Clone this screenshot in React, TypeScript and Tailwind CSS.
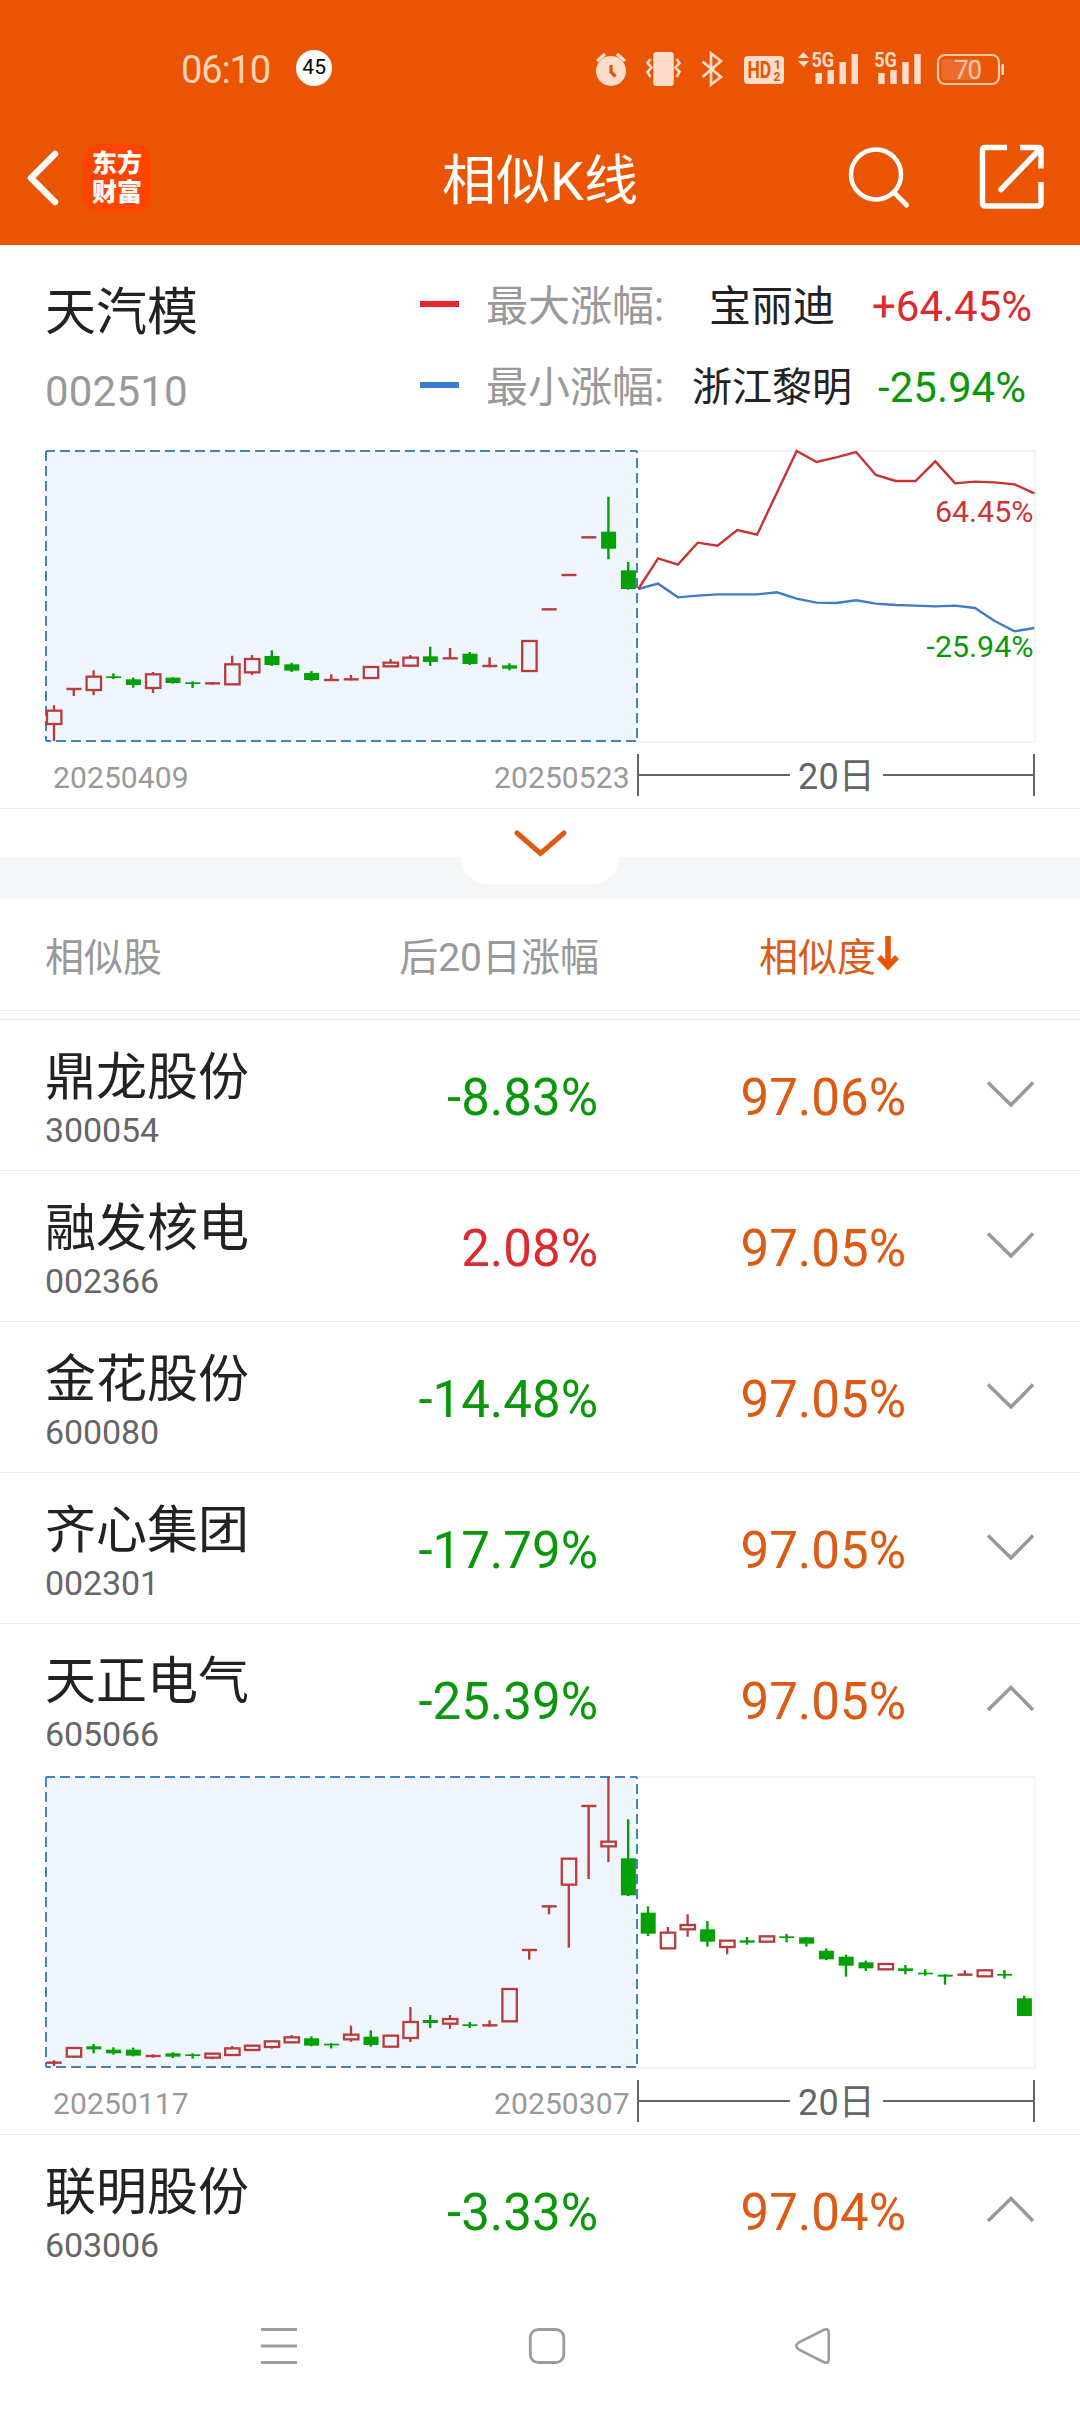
import type { ReactNode } from 'react';

type Candle = [kind: 'r' | 'g', high: number, top: number, bottom: number, low: number];

const STEP = 19.8;
const FIRST_X = 54;
const RED = '#b93b3b';
const GREEN = '#05a005';
const y = (v: number) => 2 + v / 3;

const mainCandles: Candle[] = [
  ['r', 763, 779, 819, 870], ['r', 714, 714, 714, 735], ['r', 658, 677, 717, 733], ['g', 667, 676, 681, 684],
  ['g', 680, 685, 702, 710], ['r', 663, 670, 711, 726], ['g', 679, 680, 696, 698], ['g', 691, 694, 699, 711],
  ['r', 693, 697, 697, 701], ['r', 614, 640, 700, 702], ['r', 612, 624, 664, 672], ['g', 598, 615, 642, 645],
  ['g', 635, 640, 659, 663], ['g', 660, 666, 687, 690], ['r', 670, 687, 687, 690], ['r', 672, 685, 685, 688],
  ['r', 648, 648, 681, 682], ['r', 624, 635, 646, 648], ['r', 612, 620, 644, 648], ['g', 587, 616, 633, 645],
  ['r', 591, 622, 622, 623], ['g', 603, 608, 639, 642], ['r', 619, 645, 645, 649], ['g', 637, 643, 653, 658],
  ['r', 570, 570, 660, 660], ['r', 475, 475, 475, 475], ['r', 372, 372, 372, 372], ['r', 259, 259, 259, 259],
  ['g', 137, 242, 293, 325], ['g', 333, 358, 414, 416],
];

const similarCandles: Candle[] = [
  ['r', 850, 857, 857, 867], ['r', 810, 813, 839, 843], ['g', 801, 808, 817, 829], ['g', 811, 818, 829, 833],
  ['g', 812, 818, 836, 838], ['r', 832, 837, 837, 842], ['g', 826, 829, 839, 843], ['g', 829, 832, 837, 845],
  ['r', 829, 830, 842, 847], ['r', 807, 814, 834, 836], ['r', 806, 806, 819, 819], ['r', 793, 793, 810, 815],
  ['r', 774, 781, 796, 796], ['g', 778, 784, 806, 808], ['g', 799, 800, 805, 814], ['r', 746, 773, 787, 794],
  ['g', 760, 779, 804, 809], ['r', 776, 776, 809, 811], ['r', 690, 735, 783, 795], ['g', 714, 729, 738, 753],
  ['r', 714, 726, 740, 755], ['g', 735, 742, 747, 753], ['r', 730, 745, 745, 749], ['r', 636, 636, 733, 735],
  ['r', 519, 519, 519, 548], ['r', 388, 388, 388, 412], ['r', 245, 245, 323, 512], ['r', 87, 87, 87, 306],
  ['r', 0, 194, 208, 255], ['g', 127, 244, 355, 357], ['g', 388, 407, 470, 477], ['r', 450, 467, 514, 516],
  ['r', 412, 444, 457, 479], ['g', 432, 457, 494, 509], ['r', 489, 491, 510, 532], ['g', 480, 490, 497, 503],
  ['r', 478, 478, 494, 496], ['g', 471, 478, 483, 496], ['g', 480, 481, 500, 509], ['g', 514, 521, 547, 549],
  ['g', 533, 539, 566, 599], ['g', 551, 556, 574, 582], ['r', 561, 561, 577, 579], ['g', 564, 574, 582, 592],
  ['g', 577, 587, 592, 596], ['g', 592, 593, 599, 623], ['r', 580, 593, 593, 594], ['r', 577, 580, 598, 600],
  ['g', 579, 591, 596, 605], ['g', 656, 664, 717, 717],
];

const maxLine = [414, 322, 341, 275, 284, 237, 251, 125, 0, 33, 19, 3, 72, 90, 90, 31, 97, 92, 94, 100, 127];
const minLine = [414, 398, 439, 434, 430, 430, 430, 424, 443, 455, 456, 448, 458, 462, 464, 466, 464, 471, 510, 541, 531];

const linePoints = (values: number[]) => values.map((v, i) => `${638.3 + i * STEP},${y(v)}`).join(' ');

function CandleMark({ candle: [kind, high, top, bottom, low], x }: { candle: Candle; x: number }) {
  const color = kind === 'r' ? RED : GREEN;
  if (kind === 'g') {
    return (
      <g fill={color}>
        <rect x={x - 1.2} y={y(high)} width={2.4} height={(low - high) / 3} />
        <rect x={x - 7.3} y={y(top)} width={15} height={(bottom - top) / 3} />
      </g>
    );
  }
  if (top === bottom) {
    return (
      <g fill={color}>
        <rect x={x - 1.2} y={y(high)} width={2.4} height={(low - high) / 3} />
        <rect x={x - 7.3} y={y(top) - 1.2} width={15} height={2.4} />
      </g>
    );
  }
  return (
    <g stroke={color} strokeWidth={2.3} fill="none">
      <path d={`M${x} ${y(high)}V${y(top)}M${x} ${y(bottom)}V${y(low)}`} />
      <rect x={x - 7} y={y(top)} width={14.4} height={(bottom - top) / 3} />
    </g>
  );
}

function KlineChart({ candles, from, to, children }: { candles: Candle[]; from: string; to: string; children?: ReactNode }) {
  return (
    <div>
      <svg className="block h-[296px] w-[1080px]" viewBox="0 0 1080 296" fontFamily='Roboto, "Noto Sans CJK SC", sans-serif'>
        <path d="M638 2H1035V293H638" fill="none" stroke="#f4f4f4" strokeWidth={2} />
        <rect x={46} y={2} width={591} height={290} fill="#eef5fd" />
        <path d="M46 2H637" stroke="#4583c0" strokeWidth={2} strokeDasharray="10 5" strokeDashoffset={1} />
        <path d="M46 2V292" stroke="#4583c0" strokeWidth={2} strokeDasharray="10 5" />
        <path d="M46 292H637" stroke="#4583c0" strokeWidth={2} strokeDasharray="10 5" strokeDashoffset={5} />
        {candles.map((c, i) => (
          <CandleMark key={i} candle={c} x={FIRST_X + i * STEP} />
        ))}
        <path d="M637 2V292" stroke="#4583c0" strokeWidth={2} strokeDasharray="10 5" strokeDashoffset={8} />
        {children}
      </svg>
      <div className="flex h-[63px] pl-[53px] text-[30px] leading-[35px] tracking-[0.100px] text-[#999]">
        <span className="mt-[15px] w-[136px]">{from}</span>
        <span className="mt-[15px] ml-[305px] w-[136px]">{to}</span>
        <div className="mt-[9px] ml-[7px] flex h-[42px] w-[398px] items-center border-x-2 border-[#666] text-[36px] text-[#666]">
          <span className="h-[2px] w-[151px] bg-[#666]" />
          <span className="flex-1 pt-[4px] text-center">20日</span>
          <span className="h-[2px] w-[150px] bg-[#666]" />
        </div>
      </div>
    </div>
  );
}

function Signal() {
  return (
    <g>
      <text transform="translate(-4 67) scale(0.86 1)" fontSize={21} fontWeight={700}>5G</text>
      <path d="M0 73h6.500v11H0zM12 70h6.500v14H12zM24 62h6.500v22H24zM36 54h6.500v30H36z" />
    </g>
  );
}

function StatusIcons() {
  return (
    <svg className="ml-auto block h-[50px] w-[500px]" viewBox="580 45 500 50" fill="#fcdccb" fontFamily="Roboto, sans-serif">
      <circle cx={611} cy={71} r={15} />
      <path d="M597 61l8-7M625 61l-8-7" stroke="#fcdccb" strokeWidth={3.2} />
      <path d="M611 65v7l4.500 4.500" stroke="#ea5504" strokeWidth={3.2} fill="none" />
      <rect x={653.3} y={52} width={20.4} height={34} rx={3} />
      <path d="M650.500 59l-3 4 4 4.500-4 4.500 3 5M676.500 59l3 4-4 4.500 4 4.500-3 5" stroke="#fcdccb" strokeWidth={2.6} fill="none" />
      <path d="M702.500 61.500L721 77l-10 7.500v-31L721 61 702.500 77" stroke="#fcdccb" strokeWidth={2.7} fill="none" />
      <rect x={744} y={56} width={40} height={28} rx={4} />
      <g fill="#ea5504" fontWeight={700}>
        <text transform="translate(747.5 78.300) scale(0.76 1)" fontSize={23}>HD</text>
        <text x={774} y={69} fontSize={12}>1</text>
        <text x={773.5} y={81} fontSize={12}>2</text>
      </g>
      <path d="M803.500 52l5.500 6h-11zM803.500 67l5.500-6h-11z" />
      <g transform="translate(815.5 0)"><Signal /></g>
      <g transform="translate(878.2 0)"><Signal /></g>
      <rect x={938} y={55} width={61} height={29} rx={7} fill="none" stroke="#fbc9a8" strokeWidth={2.2} />
      <rect x={941.5} y={59} width={38.5} height={21} rx={3} fill="#ee6c2b" />
      <rect x={1001.5} y={64} width={2.5} height={11} rx={1} />
      <text x={954} y={79} fontSize={26} fill="#fbc9a8" textLength={28}>70</text>
    </svg>
  );
}

function Header() {
  return (
    <header className="h-[245px] bg-[#ea5504] text-white">
      <div className="flex h-[95px] items-end">
        <div className="mb-[2px] ml-[181px] text-[38px] leading-[46px] tracking-[-1.100px] text-[#fdd3b8]">06:10</div>
        <div className="mb-[9px] ml-[26px] flex size-[36px] items-center justify-center rounded-full bg-white text-[21px] text-black">45</div>
        <StatusIcons />
      </div>
      <div className="flex h-[150px] items-start">
        <svg className="mt-[49px] ml-[20px] block h-[68px] w-[50px]" viewBox="20 144 50 68" fill="none">
          <path d="M55 154L31 178l24 24" stroke="#fff" strokeWidth={6.5} strokeLinecap="round" strokeLinejoin="round" />
        </svg>
        <div className="mt-[49px] ml-[13px] flex h-[68px] w-[68px] flex-col items-center justify-center rounded-[16px] bg-[#ff4400] text-[25px] leading-[29px] font-black">
          <span>东方</span>
          <span>财富</span>
        </div>
        <h1 className="mt-[47px] ml-[291px] w-[200px] text-[54px] leading-[80px] whitespace-nowrap">相似K线</h1>
        <svg className="mt-[45px] ml-[198px] block h-[75px] w-[220px]" viewBox="840 140 220 75" fill="none" stroke="#fff">
          <circle cx={876} cy={174.5} r={25} strokeWidth={4.5} />
          <path d="M895 193.500l11.500 11.500" strokeWidth={5} strokeLinecap="round" />
          <path d="M1007 147.500H984.500a2 2 0 0 0-2 2V204a2 2 0 0 0 2 2H1039a2 2 0 0 0 2-2V182M1020 147.500h19a2 2 0 0 1 2 2V168.500" strokeWidth={5.5} />
          <path d="M1001 189.500L1040 149" strokeWidth={5.5} strokeLinecap="round" />
        </svg>
      </div>
    </header>
  );
}

function LegendRow({ bar, label, name, nameSize, value, color }: { bar: string; label: string; name: string; nameSize: string; value: string; color: string }) {
  return (
    <div className="flex h-[81px] items-center">
      <span className={`mb-[5px] h-[6px] w-[39px] ${bar}`} />
      <span className="ml-[27px] w-[191px] text-[42px] text-[#999]">{label}</span>
      <span className={`w-[190px] text-center text-[#222] ${nameSize}`}>{name}</span>
      <span className={`w-[170px] text-center text-[42px] ${color}`}>{value}</span>
    </div>
  );
}

function Chevron({ up = false }: { up?: boolean }) {
  return (
    <svg className="block h-[30px] w-[52px]" viewBox="0 0 52 30" fill="none" stroke="#999" strokeWidth={3.5}>
      <path d={up ? 'M4 27L27 4.500 49 27' : 'M4 3.500L27 26 49 3.500'} />
    </svg>
  );
}

interface Stock {
  name: string;
  code: string;
  change: string;
  similarity: string;
  open?: boolean;
}

const stocks: Stock[] = [
  { name: '鼎龙股份', code: '300054', change: '-8.83%', similarity: '97.06%' },
  { name: '融发核电', code: '002366', change: '2.08%', similarity: '97.05%' },
  { name: '金花股份', code: '600080', change: '-14.48%', similarity: '97.05%' },
  { name: '齐心集团', code: '002301', change: '-17.79%', similarity: '97.05%' },
  { name: '天正电气', code: '605066', change: '-25.39%', similarity: '97.05%', open: true },
  { name: '联明股份', code: '603006', change: '-3.33%', similarity: '97.04%', open: true },
];

function StockRow({ stock }: { stock: Stock }) {
  const changeColor = stock.change.startsWith('-') ? 'text-[#0a980a]' : 'text-[#dd2a2e]';
  return (
    <div className="flex h-[150px] pl-[45px]">
      <div className="w-[253px]">
        <div className="mt-[20px] text-[51px] leading-[76px] text-[#222]">{stock.name}</div>
        <div className="-mt-[4px] text-[34px] leading-[36px] tracking-[-0.100px] text-[#666]">{stock.code}</div>
      </div>
      <div className={`mt-[48px] w-[300px] text-right text-[51px] leading-[60px] ${changeColor}`}>{stock.change}</div>
      <div className="mt-[48px] w-[308px] text-right text-[51px] leading-[60px] text-[#dc5a14]">{stock.similarity}</div>
      <div className="mt-[59px] ml-[78px]">
        <Chevron up={stock.open} />
      </div>
    </div>
  );
}

export default function App() {
  return (
    <div className="flex h-[2412px] w-[1080px] flex-col overflow-hidden bg-white font-[Roboto,'Noto_Sans_CJK_SC',sans-serif]" lang="zh-CN">
      <Header />

      <section className="flex h-[204px] items-start">
        <div className="w-[420px] pl-[45px]">
          <div className="mt-[30px] text-[51px] leading-[76px] text-[#222]">天汽模</div>
          <div className="mt-[16px] text-[42px] leading-[50px] tracking-[0.200px] text-[#999]">002510</div>
        </div>
        <div className="mt-[21px]">
          <LegendRow bar="bg-[#e8262a]" label="最大涨幅:" name="宝丽迪" nameSize="text-[42px]" value="+64.45%" color="text-[#dd2a2e]" />
          <LegendRow bar="bg-[#3b7dd3]" label="最小涨幅:" name="浙江黎明" nameSize="text-[40px]" value="-25.94%" color="text-[#0a980a]" />
        </div>
      </section>

      <KlineChart candles={mainCandles} from="20250409" to="20250523">
        <polyline points={linePoints(minLine)} fill="none" stroke="#3f7cc8" strokeWidth={2.4} />
        <polyline points={linePoints(maxLine)} fill="none" stroke="#c93232" strokeWidth={2.4} />
        <text x={1033.5} y={73} fontSize={30.4} textAnchor="end" fill="#cf3434">64.45%</text>
        <text x={1033.5} y={208} fontSize={30.4} textAnchor="end" fill="#0a980a">-25.94%</text>
      </KlineChart>

      <div className="h-[49px] border-t border-[#ebebeb]" />
      <div className="flex h-[42px] justify-center bg-[#f6f7f9]">
        <div className="flex h-[27px] w-[158px] justify-center rounded-b-[27px] bg-white">
          <svg className="-mt-[30px] block h-[32px] w-[56px]" viewBox="0 0 56 32" fill="none">
            <path d="M5 6L28.500 26.500 52 6" stroke="#e05a14" strokeWidth={5} strokeLinecap="round" />
          </svg>
        </div>
      </div>

      <div className="flex h-[111px] pt-[30px] pl-[45px] text-[39px] leading-[58px] text-[#999]">
        <div className="w-[253px]">相似股</div>
        <div className="w-[301px] text-right">后20日涨幅</div>
        <div className="ml-[160px] flex text-[#dc5a14]">
          相似度
          <svg className="mt-[5px] block h-[38px] w-[24px]" viewBox="0 0 24 38" fill="none" stroke="#ea5504" strokeWidth={5.5}>
            <path d="M12 2v31M3 23L12 32.500l9-9.500" />
          </svg>
        </div>
      </div>
      <div className="h-[9px] border-t border-[#ebebeb]" />

      {stocks.map((s) => (
        <div key={s.code} className="border-t border-[#ebebeb]">
          <StockRow stock={s} />
          {s.code === '605066' && (
            <div className="pt-px">
              <KlineChart candles={similarCandles} from="20250117" to="20250307" />
            </div>
          )}
        </div>
      ))}

      <nav className="flex h-[127px] pt-[36px]">
        <svg className="block h-[50px] w-[1080px]" viewBox="0 2321 1080 50" fill="none" stroke="#9c9c9c" strokeWidth={3}>
          <path d="M261 2329.500h36M261 2346h36M261 2362.500h36" />
          <rect x={530.3} y={2329.5} width={33.5} height={33} rx={8} strokeWidth={2.8} />
          <path d="M798.500 2342.700L823.500 2330Q828.800 2327.500 828.800 2333V2359Q828.800 2364.500 823.500 2362L798.500 2349.300Q794 2346 798.500 2342.700Z" strokeWidth={2.6} />
        </svg>
      </nav>
    </div>
  );
}
